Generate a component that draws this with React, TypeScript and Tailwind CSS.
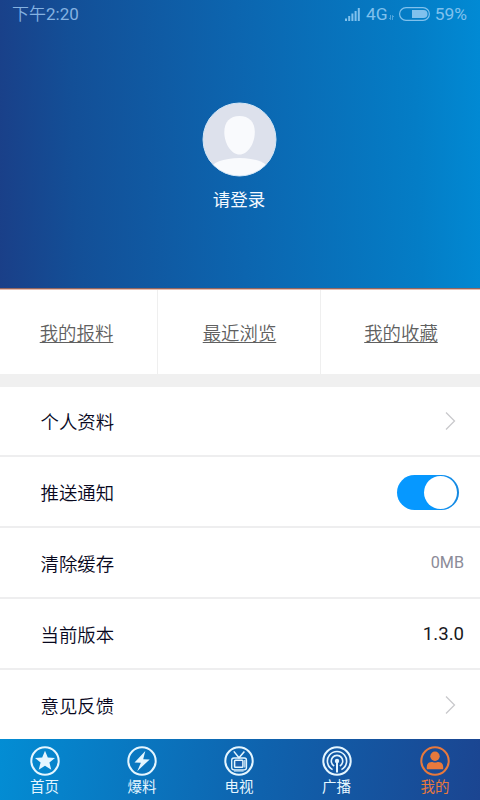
import React from "react";

const tabs = ["我的报料", "最近浏览", "我的收藏"];

function Chevron() {
  return (
    <svg className="mr-2 h-5 w-[11px]" viewBox="0 0 11 20" fill="none" stroke="#c9c9cc" strokeWidth="1.3">
      <path d="M1 1.5 9.5 10 1 18.5" />
    </svg>
  );
}

function Toggle() {
  return (
    <span className="mt-px mr-[5px] flex h-[35px] w-[62px] items-center justify-end rounded-full bg-linear-to-r from-[#0698ff] from-50% to-[#1588e0] p-px pr-[2px]">
      <span className="h-[33px] w-[33px] rounded-full bg-white" />
    </span>
  );
}

const rows: { label: string; right: React.ReactNode }[] = [
  { label: "个人资料", right: <Chevron /> },
  { label: "推送通知", right: <Toggle /> },
  { label: "清除缓存", right: <span className="pt-[2px] text-[16.200px] text-[#8b8b98]">0MB</span> },
  { label: "当前版本", right: <span className="pt-[3px] text-[18.600px] text-[#18181c]">1.3.0</span> },
  { label: "意见反馈", right: <Chevron /> },
];

const navItems: { label: string; active?: boolean; icon: React.ReactNode }[] = [
  {
    label: "首页",
    icon: (
      <path fill="currentColor" d="m15 4.8 2.8 6.8 7.200.400-5.600 4.500 1.900 7.200-6.300-4-6.300 4 1.900-7.200L5 12l7.200-.400z" />
    ),
  },
  {
    label: "爆料",
    icon: <path fill="currentColor" d="M18.300 5 7.500 16.600l6.400.100-3.700 8.500L22.700 13.400l-6.500-.100z" />,
  },
  {
    label: "电视",
    icon: (
      <g fill="none" stroke="currentColor">
        <path strokeWidth="1.5" d="m9.800 5.400 5.200 6.400 5.400-6.400" />
        <rect x="7.700" y="12" width="14.800" height="11.800" rx="2.200" strokeWidth="1.300" />
        <rect x="10.600" y="14.300" width="8.300" height="7" rx=".8" strokeWidth="1.500" fill="#1b61ad" />
        <path strokeWidth="1.200" d="M20.900 14v7.500M10 25h9.600" />
      </g>
    ),
  },
  {
    label: "广播",
    icon: (
      <g fill="none" stroke="currentColor">
        <circle cx="15" cy="15" r="2.200" fill="currentColor" stroke="none" />
        <path strokeWidth="2" d="M15 15v11.500" />
        <path strokeWidth="1.600" d="M12.200 20a5.700 5.700 0 1 1 5.600 0M10.600 23.600a9.600 9.600 0 1 1 8.800 0" />
      </g>
    ),
  },
  {
    label: "我的",
    active: true,
    icon: (
      <g fill="currentColor">
        <circle cx="15" cy="10.300" r="4.700" />
        <path d="M6.800 23.200v-2.500c0-2.800 2-4.600 4.800-4.600 1 0 1.900.500 3.400.500s2.400-.500 3.400-.500c2.800 0 4.800 1.800 4.800 4.600v2.500z" />
      </g>
    ),
  },
];

function StatusBar() {
  return (
    <div className="flex h-7 items-center justify-between pr-[13px] pl-3 text-[17px] leading-7 text-[#85b2e1]">
      <span>
        <span className="font-[350]">下午</span>2:20
      </span>
      <div className="flex items-center text-[#80c1ed]">
        <svg className="mr-[6px] h-[13px] w-[15px]" viewBox="0 0 15 13" fill="currentColor">
          <path d="M0 10.500h2V13H0zM3.200 8h2v5h-2zM6.400 5.500h2V13h-2zM9.600 3h2v10h-2zM12.800 0h2v13h-2z" />
        </svg>
        <span className="text-[17.400px]">4G</span>
        <svg className="mt-[6px] ml-[1px] h-[5px] w-[5px]" viewBox="0 0 5 5" fill="none" stroke="currentColor" strokeWidth=".6">
          <path d="M1.500 0v4.500L0 3M3.500 5V.500L5 2" />
        </svg>
        <svg className="mr-[5px] ml-[5px] h-[14px] w-[31px]" viewBox="0 0 31 14">
          <rect x=".600" y=".600" width="29.800" height="12.800" rx="6.400" fill="none" stroke="currentColor" strokeWidth="1.200" />
          <path fill="currentColor" d="M13 3h11.500a4 4 0 0 1 0 8H13z" />
        </svg>
        <span className="text-[17.400px]">59%</span>
      </div>
    </div>
  );
}

export default function App() {
  return (
    <div className="flex h-[800px] w-[480px] flex-col overflow-hidden bg-white font-['Roboto','Noto_Sans_CJK_SC',sans-serif]">
      <header className="h-[288px] shrink-0 bg-linear-[88deg,#1a3f88,#134f97_16%,#0c65af_50%,#047dc6_86%,#018ad4]">
        <StatusBar />
        <div className="mt-[74px] flex flex-col items-center pr-[2px]">
          <svg className="h-[75px] w-[75px]" viewBox="0 0 75 75">
            <defs>
              <clipPath id="avatar">
                <circle cx="37.500" cy="37.500" r="36.500" />
              </clipPath>
            </defs>
            <circle cx="37.500" cy="37.500" r="36.500" fill="#dde1ec" />
            <g clipPath="url(#avatar)" fill="#f9fafd">
              <path d="M37.500 14c9.500 0 15.300 6 15.300 16 0 12-7.300 22.500-15.300 22.500S22.300 42 22.300 30C22.300 20 28 14 37.500 14z" />
              <ellipse cx="37.500" cy="67.500" rx="29" ry="11.500" />
            </g>
            <circle cx="37.500" cy="37.500" r="36.500" fill="none" stroke="#d3e6f6" strokeWidth="1" />
          </svg>
          <span className="mt-[10px] text-[17.500px] leading-[26px] text-[#f4f9ff]">请登录</span>
        </div>
      </header>
      <div className="h-[2px] shrink-0 border-b border-[#e6bcae] bg-[#93665f]" />
      <div className="grid h-[84px] shrink-0 grid-cols-[157px_163px_160px]">
        {tabs.map((tab, i) => (
          <div
            key={tab}
            className={`flex items-center justify-center pt-1 ${i === 0 ? "pr-[4px]" : "border-l border-[#efefef] pl-px"} ${i === 2 ? "pl-[3px]" : ""}`}
          >
            <span className="text-[18.400px] font-[350] text-[#606060] underline decoration-1 underline-offset-[2px]">{tab}</span>
          </div>
        ))}
      </div>
      <div className="h-[13px] shrink-0 bg-[#f0f0f0]" />
      <main className="shrink-0">
        {rows.map((row, i) => (
          <div
            key={row.label}
            className={`flex items-center justify-between pr-4 pl-10 ${i === rows.length - 1 ? "h-[69px]" : i === 0 ? "h-[70px] border-b-2 border-[#eeeeef]" : "h-[71px] border-b-2 border-[#eeeeef]"}`}
          >
            <span className={`pl-[0.500px] text-[18.400px] font-[350] text-[#08081e] ${i === 0 ? "pt-[3px]" : "pt-[4px]"}`}>
              {row.label}
            </span>
            {row.right}
          </div>
        ))}
      </main>
      <nav className="grid h-[61px] shrink-0 grid-cols-[89px_106px_88px_107px_90px] bg-linear-[98deg,#038dd4,#0f62ad_55%,#1b4591]">
        {navItems.map((item) => (
          <div
            key={item.label}
            className={`flex flex-col items-center pt-[7px] ${item.active ? "text-[#e8793c]" : "text-[#e5f6ff]"}`}
          >
            <svg className="h-[30px] w-[30px] shrink-0" viewBox="0 0 30 30">
              <circle cx="15" cy="15" r="13.700" fill="none" stroke="currentColor" strokeWidth="2" />
              {item.icon}
            </svg>
            <span className="mt-[2px] text-[14.500px] leading-5">{item.label}</span>
          </div>
        ))}
      </nav>
    </div>
  );
}
